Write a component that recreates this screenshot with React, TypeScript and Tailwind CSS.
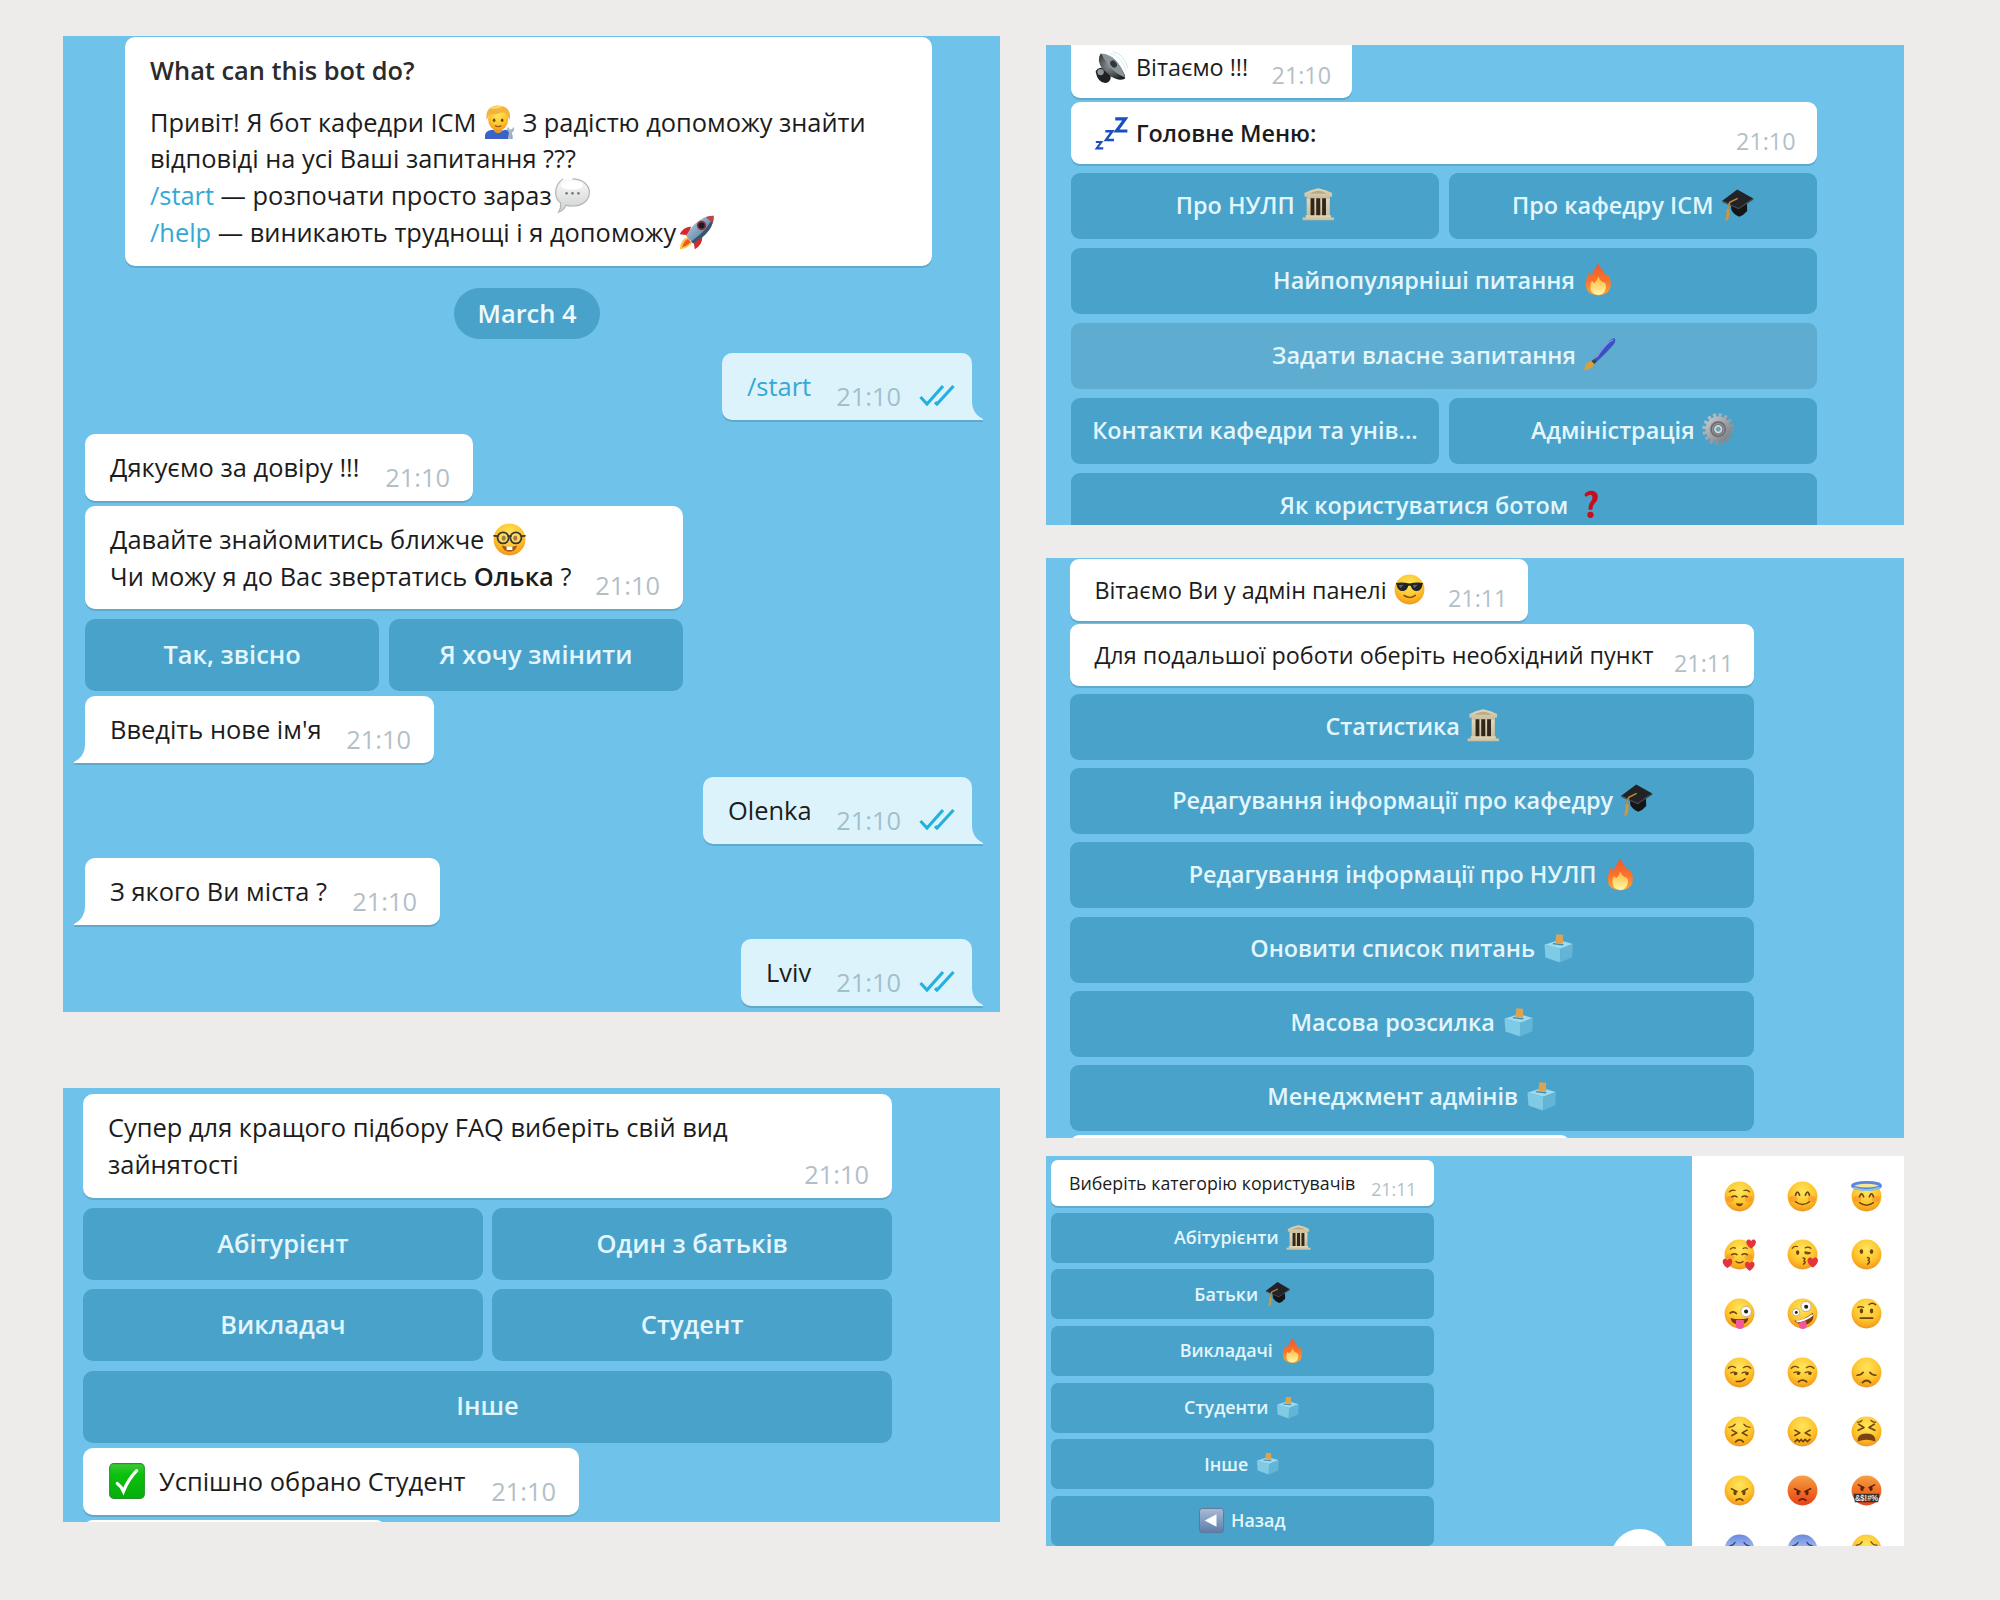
import React from "react";

type Size = "lg" | "md" | "sm";

const DARK = "#6e4310";

function Defs() {
  return (
    <svg className="absolute h-0 w-0" aria-hidden="true">
      <defs>
        <radialGradient id="face" cx="50%" cy="32%" r="68%">
          <stop offset="0" stopColor="#ffe65c" />
          <stop offset="0.6" stopColor="#fdc62f" />
          <stop offset="0.9" stopColor="#f8a31a" />
          <stop offset="1" stopColor="#dd9640" />
        </radialGradient>
        <linearGradient id="angry" x1="0" y1="0" x2="0" y2="1">
          <stop offset="0" stopColor="#f6a146" />
          <stop offset="0.55" stopColor="#ee6a22" />
          <stop offset="1" stopColor="#e8401a" />
        </linearGradient>
        <linearGradient id="cold" x1="0" y1="0" x2="0" y2="1">
          <stop offset="0" stopColor="#6a8ade" />
          <stop offset="0.5" stopColor="#a9bff0" />
          <stop offset="1" stopColor="#fdc62f" />
        </linearGradient>
        <linearGradient id="flame" x1="0" y1="0" x2="0" y2="1">
          <stop offset="0" stopColor="#f2552c" />
          <stop offset="0.55" stopColor="#f9752b" />
          <stop offset="1" stopColor="#f9a53c" />
        </linearGradient>
        <linearGradient id="flameIn" x1="0" y1="0" x2="0" y2="1">
          <stop offset="0" stopColor="#fdb53a" />
          <stop offset="1" stopColor="#fff7a8" />
        </linearGradient>
        <linearGradient id="bubble" x1="0" y1="0" x2="0" y2="1">
          <stop offset="0" stopColor="#fafafa" />
          <stop offset="1" stopColor="#cfd0d1" />
        </linearGradient>
        <linearGradient id="green" x1="0" y1="0" x2="0" y2="1">
          <stop offset="0" stopColor="#3fca35" />
          <stop offset="0.3" stopColor="#0cc10e" />
          <stop offset="1" stopColor="#04ad0c" />
        </linearGradient>
        <linearGradient id="rocket" x1="0" y1="0" x2="1" y2="1">
          <stop offset="0" stopColor="#c9dcec" />
          <stop offset="0.5" stopColor="#7e9fba" />
          <stop offset="1" stopColor="#41607c" />
        </linearGradient>
        <linearGradient id="stone" x1="0" y1="0" x2="0" y2="1">
          <stop offset="0" stopColor="#e3d8b8" />
          <stop offset="1" stopColor="#c9bd9f" />
        </linearGradient>
        <linearGradient id="steel" x1="0" y1="0" x2="1" y2="1">
          <stop offset="0" stopColor="#c4c6ca" />
          <stop offset="1" stopColor="#7d7f86" />
        </linearGradient>
        <linearGradient id="back" x1="0" y1="0" x2="0" y2="1">
          <stop offset="0" stopColor="#a9bcd6" />
          <stop offset="1" stopColor="#5d7caa" />
        </linearGradient>
        <radialGradient id="cone" cx="40%" cy="45%" r="65%">
          <stop offset="0" stopColor="#8d9499" />
          <stop offset="0.6" stopColor="#4b5053" />
          <stop offset="1" stopColor="#1d1f21" />
        </radialGradient>
      </defs>
    </svg>
  );
}

function L({ d, w = 1.5, c = DARK }: { d: string; w?: number; c?: string }) {
  return <path d={d} fill="none" stroke={c} strokeWidth={w} strokeLinecap="round" strokeLinejoin="round" />;
}

function Base({ fill = "url(#face)" }: { fill?: string }) {
  return <circle cx="16" cy="16" r="15.4" fill={fill} />;
}

function Blush() {
  return (
    <g fill="#f7772a" opacity="0.4">
      <ellipse cx="6.5" cy="18.5" rx="4.2" ry="3.2" />
      <ellipse cx="25.5" cy="18.5" rx="4.2" ry="3.2" />
    </g>
  );
}

function Dots({ y = 13 }: { y?: number }) {
  return (
    <g fill={DARK}>
      <ellipse cx="10.8" cy={y} rx="1.8" ry="2.5" />
      <ellipse cx="21.2" cy={y} rx="1.8" ry="2.5" />
    </g>
  );
}

function Heart({ x, y, s = 1 }: { x: number; y: number; s?: number }) {
  return (
    <path
      transform={`translate(${x} ${y}) scale(${s})`}
      d="M0 4.6C-3 2.6-5-.2-4.4-2.4-3.8-4.6-1-4.8 0-2.6 1-4.8 3.8-4.6 4.4-2.4 5-.2 3 2.6 0 4.6Z"
      fill="#e3333c"
    />
  );
}

const EMOJI: Record<string, React.ReactNode> = {
  relaxed: (
    <>
      <Base />
      <Blush />
      <L d="M5.5 11.2Q8 8.6 11.5 9.8M26.5 11.2Q24 8.6 20.5 9.8" w={1.2} />
      <L d="M8 16.4Q10.6 14.4 13.4 16.4M24 16.4Q21.4 14.4 18.6 16.4" />
      <path d="M12.2 22.6Q16 24 19.8 22.6 18.8 26 16 26T12.2 22.6Z" fill={DARK} />
    </>
  ),
  blush: (
    <>
      <Base />
      <Blush />
      <L d="M8.8 14.6Q10.8 8.4 13 14.6M19 14.6Q21.2 8.4 23.2 14.6" w={1.7} />
      <L d="M8.8 21.4Q16 27 23.2 21.4" />
    </>
  ),
  halo: (
    <>
      <Base />
      <Blush />
      <L d="M8.8 16.2Q10.8 10.4 13 16.2M19 16.2Q21.2 10.4 23.2 16.2" w={1.7} />
      <L d="M8.8 22.4Q16 27.6 23.2 22.4" />
      <ellipse cx="16" cy="4.8" rx="14.4" ry="3.4" fill="#f3e79a" stroke="#5a86dc" strokeWidth="3" />
      <path d="M2.4 6.8Q16 12 29.6 6.8" fill="none" stroke="#87c6ea" strokeWidth="1.8" />
    </>
  ),
  hearts: (
    <>
      <Base />
      <Blush />
      <L d="M6.5 10.4Q9 8 11.8 9.4M24 9.6Q21.6 8.4 19.8 9.8" w={1.2} />
      <L d="M8 16.2Q10.6 14.2 13.4 16.2M24 16.2Q21.4 14.2 18.6 16.2" />
      <L d="M12.4 23.2Q16 26 19.6 23.2" />
      <Heart x={28} y={5} s={1.1} />
      <Heart x={3.6} y={25} s={1.1} />
      <Heart x={26.6} y={28} s={1.1} />
    </>
  ),
  kissHeart: (
    <>
      <Base />
      <L d="M5.4 9.6Q7.6 6.6 10.8 7.8M18.6 9.2Q21.6 7.4 24.6 9.6" w={1.2} />
      <ellipse cx="11" cy="14" rx="1.7" ry="2.4" fill={DARK} />
      <L d="M18.6 14.4Q21 16.4 24 14.4M18.6 13.4 24 14.4" w={1.3} />
      <L d="M16.6 19.6Q20 19.8 17.4 22.6 20.4 23.6 17 26" />
      <Heart x={26.6} y={24} s={1.2} />
    </>
  ),
  kiss: (
    <>
      <Base />
      <Dots />
      <L d="M17 19.2Q20.4 19.4 17.8 22.2 20.8 23.2 17.2 26" />
    </>
  ),
  winkTongue: (
    <>
      <Base />
      <L d="M6.4 15.6Q9.6 13 12.8 16" w={1.7} />
      <circle cx="22.8" cy="14" r="5.4" fill="#fff" stroke="#a9a396" strokeWidth="0.8" />
      <circle cx="22.8" cy="14" r="2.1" fill="#27211c" />
      <path d="M6.6 20.6Q16 23.4 25.4 20.6 24 27.4 16 27.4T6.6 20.6Z" fill="#7a3a12" />
      <path d="M12.4 22.6H20.6V28.6Q20.2 32 16.5 32T12.4 28.6Z" fill="#f2569c" />
    </>
  ),
  zany: (
    <>
      <Base />
      <circle cx="19.6" cy="8.8" r="5.2" fill="#fff" stroke="#a9a396" strokeWidth="0.8" />
      <circle cx="19.8" cy="9" r="2.1" fill="#27211c" />
      <circle cx="9.4" cy="14.8" r="3.8" fill="#fff" stroke="#a9a396" strokeWidth="0.8" />
      <circle cx="9.6" cy="15" r="1.5" fill="#27211c" />
      <path d="M7.4 23.6Q18 23 26.6 15.2 29 22 22.6 26.4 14.6 30.6 7.4 23.6Z" fill="#7a3a12" />
      <path d="M9 23.6Q18.6 22.6 26.2 16.6L26.8 18.4Q20 24.4 10.4 25.2Z" fill="#fff" />
      <path d="M11.8 25.6 19.6 23.4 20.4 28.6Q20 32 16.4 32T12.6 29Z" fill="#f2569c" />
    </>
  ),
  raised: (
    <>
      <Base />
      <Dots y={13.4} />
      <L d="M7 9.6Q10 8.2 13 9.6M18.6 6.8Q22 4 25.4 7" w={1.5} />
      <L d="M9.6 20.8H22.4" w={1.7} />
    </>
  ),
  smirk: (
    <>
      <Base />
      <L d="M4.4 11.6Q7.4 8 12 11M20 11Q24.6 8 27.6 11.6" w={1.3} />
      <L d="M7 16.6Q10 14.6 13.4 16.6M18.6 16.6Q21.8 14.6 25 16.6" w={1.3} />
      <circle cx="11.8" cy="17.2" r="1.7" fill={DARK} />
      <circle cx="23.6" cy="17.2" r="1.7" fill={DARK} />
      <L d="M12.6 25.2Q18.6 26 21.8 22.4" />
    </>
  ),
  unamused: (
    <>
      <Base />
      <L d="M4.4 11.6Q7.4 8 12 11M20 11Q24.6 8 27.6 11.6" w={1.3} />
      <L d="M7 16.2Q10 14.6 13.4 16.2M18.6 16.2Q21.8 14.6 25 16.2" w={1.3} />
      <circle cx="11.8" cy="17" r="1.7" fill={DARK} />
      <circle cx="23.6" cy="17" r="1.7" fill={DARK} />
      <L d="M11.8 25.6Q16 22.2 20.2 25.6" w={1.8} />
    </>
  ),
  sad: (
    <>
      <Base />
      <L d="M6.2 18.8Q10.4 18.8 12.6 15.8M25.8 18.8Q21.6 18.8 19.4 15.8" w={1.7} />
      <L d="M11.8 26.4Q16 22.2 20.2 26.4" w={1.8} />
    </>
  ),
  persevere: (
    <>
      <Base />
      <L d="M5 11.6Q9.4 11.4 11.6 8.4M27 11.6Q22.6 11.4 20.4 8.4" w={1.2} />
      <L d="M8.2 14.6 13.2 17.4 8.2 20.2M23.8 14.6 18.8 17.4 23.8 20.2" w={1.7} />
      <L d="M12 26.6Q16 22.6 20 26.6" w={1.8} />
    </>
  ),
  confounded: (
    <>
      <Base />
      <L d="M8.2 14.6 13.2 17.4 8.2 20.2M23.8 14.6 18.8 17.4 23.8 20.2" w={1.7} />
      <L d="M8.4 26.4 10.6 24.2 12.8 26.4 14.6 24.2 16.6 26.4 18.8 24.2 21 26.4 23.6 24.2" w={1.7} />
    </>
  ),
  tired: (
    <>
      <Base />
      <L d="M6.6 6.4Q9.6 6.6 11.4 4.4M25.4 6.4Q22.4 6.6 20.6 4.4" w={1.2} />
      <L d="M8 8.4 13.4 11.8 7.4 14.8M24 8.4 18.6 11.8 24.6 14.8" w={1.7} />
      <path d="M6.8 26.4Q6 18 16 18T25.2 26.4Q16 22.4 6.8 26.4Z" fill="#7a4314" />
    </>
  ),
  angry: (
    <>
      <Base />
      <L d="M7.6 14.2 13.6 17.2M24.4 14.2 18.4 17.2" />
      <ellipse cx="11.4" cy="18.2" rx="1.7" ry="2.6" fill={DARK} />
      <ellipse cx="20.6" cy="18.2" rx="1.7" ry="2.6" fill={DARK} />
      <L d="M12.6 26.2Q16 23 19.4 26.2" w={1.8} />
    </>
  ),
  rage: (
    <>
      <Base fill="url(#angry)" />
      <L d="M7.6 14.2 13.6 17.2M24.4 14.2 18.4 17.2" c="#5e200c" />
      <ellipse cx="11.4" cy="18.2" rx="1.7" ry="2.6" fill="#5e200c" />
      <ellipse cx="20.6" cy="18.2" rx="1.7" ry="2.6" fill="#5e200c" />
      <L d="M12.6 26.2Q16 23 19.4 26.2" w={1.8} c="#5e200c" />
    </>
  ),
  curse: (
    <>
      <Base fill="url(#angry)" />
      <L d="M7.6 10.2 13.4 13M24.4 10.2 18.6 13" c="#5e200c" />
      <ellipse cx="11.4" cy="14" rx="1.7" ry="2.6" fill="#5e200c" />
      <ellipse cx="20.6" cy="14" rx="1.7" ry="2.6" fill="#5e200c" />
      <path d="M2.6 19.4H29.4L28 28H4Z" fill="#35302f" />
      <text x="16" y="26.8" textAnchor="middle" fontSize="8.6" fontWeight="700" fill="#e9e9e9" fontFamily="Liberation Sans, sans-serif" textLength="24" lengthAdjust="spacingAndGlyphs">
        &amp;$!#%
      </text>
    </>
  ),
  cold: (
    <>
      <Base fill="url(#cold)" />
      <L d="M5.4 12.6Q9.6 12 11.4 8.6M26.6 12.6Q22.4 12 20.6 8.6" w={1.3} c="#3a4a86" />
      <Dots y={18} />
    </>
  ),
  cry: (
    <>
      <Base />
      <L d="M5.4 11.6Q9.6 11.4 11.4 8M26.6 11.6Q22.4 11.4 20.6 8" w={1.3} />
      <Dots y={18} />
    </>
  ),
  nerd: (
    <>
      <Base />
      <ellipse cx="10.4" cy="14.6" rx="2" ry="2.6" fill={DARK} />
      <ellipse cx="21.6" cy="14.6" rx="2" ry="2.6" fill={DARK} />
      <circle cx="9.8" cy="14.4" r="5.4" fill="#f5e9a0" fillOpacity="0.35" stroke="#3b3630" strokeWidth="1.7" />
      <circle cx="22.2" cy="14.4" r="5.4" fill="#f5e9a0" fillOpacity="0.35" stroke="#3b3630" strokeWidth="1.7" />
      <L d="M14.8 12.8H17.2M1 12.4 4.6 12.8M31 12.4 27.4 12.8" c="#3b3630" w={1.7} />
      <path d="M8.6 21.8Q16 24.4 23.4 21.8 22 27.8 16 27.8T8.6 21.8Z" fill="#a4561d" />
      <path d="M13.2 22.8H18.8V26.2H13.2Z" fill="#fff" />
    </>
  ),
  cool: (
    <>
      <Base />
      <path d="M2 9.4Q8 8.2 16 9.8 24 8.2 30 9.4L29.2 11.6Q28 17.6 23.2 17.6 18.8 17.6 17.2 12H14.8Q13.2 17.6 8.8 17.6 4 17.6 2.8 11.6Z" fill="#1f2326" />
      <path d="M5 11.4 10 11 6.4 14.6ZM19.4 11.4 24.4 11 20.8 14.8Z" fill="#5c666d" />
      <L d="M10.4 22.2Q16.4 26.4 22 22" c="#8c4d13" w={1.7} />
    </>
  ),
  mechanic: (
    <>
      <path d="M2.8 32V28.6Q3.4 24 10 23.4L16 25 22 23.4Q28 24 28.6 28.6V32Z" fill="#3a63c8" />
      <path d="M11.6 20H18.8V25Q15.2 28 11.6 25Z" fill="#e69d20" />
      <ellipse cx="15.2" cy="13.4" rx="9.4" ry="10.8" fill="url(#face)" />
      <path d="M4.4 14Q2.4 1.2 15 .4 28 .8 26.2 14L23.8 10.4Q22.8 6.6 19 6.8 11 9.6 7 8.6Z" fill="#f2b43c" />
      <path d="M7 3.8Q13-.6 20 1.6 14 3.6 7 3.8Z" fill="#ffdc74" />
      <ellipse cx="11.4" cy="14.4" rx="1.2" ry="1.6" fill={DARK} />
      <ellipse cx="19" cy="14.4" rx="1.2" ry="1.6" fill={DARK} />
      <L d="M12.6 19.6Q15.2 21 17.8 19.6" w={1.2} c="#a3501d" />
      <path d="M24.2 32 25.4 26 23.4 23.2 24.4 20.4 26 23 28.2 22.8 29.6 20.4 30.4 23.4 28.2 26.4 28 32Z" fill="#a5b6c4" />
    </>
  ),
  speech: (
    <>
      <path d="M16 .8C24.8.8 31.4 6 31.4 13.2S24.8 25.6 16.4 25.6Q12.6 25.8 10 24.8 8 29.8 3.4 31.2 5.6 27.6 5.2 22.8 .6 19.4.6 13.2.6 6 7.2.8 16 .8Z" fill="url(#bubble)" stroke="#b3b4b6" strokeWidth="1.1" />
      <ellipse cx="15.4" cy="6.6" rx="10" ry="4.2" fill="#fff" />
      <g fill="#77797c">
        <circle cx="10.6" cy="14" r="1.2" />
        <circle cx="16" cy="14" r="1.2" />
        <circle cx="21.4" cy="14" r="1.2" />
      </g>
    </>
  ),
  rocketShip: (
    <>
      <path d="M8 20Q1 22.4.8 31.4 8 30.4 12 25.6Z" fill="#f9c53a" />
      <path d="M8.4 22Q4.2 24 2.8 29.6 8 28 10.6 25Z" fill="#f0552a" />
      <path d="M11 10.4Q3.6 11 .6 17.6L8.6 18.4Z" fill="#d4282a" />
      <path d="M21.4 20.6Q21 28 14.4 31.2L13.2 23.4Z" fill="#d4282a" />
      <path d="M31.6.6Q32.4 14.6 13 26L6.4 19Q16 1.4 31.6.6Z" fill="url(#rocket)" />
      <path d="M31.6.6Q32.4 14.6 13 26L11.2 24.2Q27 13 31.6.6Z" fill="#3d5468" />
      <path d="M31.6.6Q31.6 4 30.4 7.2L24.6 1.8Q28 .6 31.6.6Z" fill="#b9464c" />
      <circle cx="20.6" cy="9.6" r="4.3" fill="#8f2f3e" />
      <circle cx="20.6" cy="9.6" r="2.7" fill="#191c22" />
    </>
  ),
  check: (
    <>
      <rect x="0.6" y="0.6" width="30.8" height="30.8" rx="3.6" fill="url(#green)" stroke="#22952a" strokeWidth="1" />
      <path d="M7.4 18.2Q10.6 20.4 12.8 25.2 17 14.6 24.6 6.8" fill="none" stroke="#fff" strokeWidth="2.9" strokeLinecap="round" />
    </>
  ),
  speaker: (
    <>
      <path d="M17 .8Q28 2 32 17" fill="none" stroke="#c9e7f0" strokeWidth="0.9" />
      <path d="M14.4 2.4Q26 5 30 19" fill="none" stroke="#d6eef4" strokeWidth="0.9" />
      <path d="M.6 20.2Q2 15.6 8.6 16.2L15.2 23.4Q16 27.6 12.4 30.6 3.2 32.8.6 20.2Z" fill="#1e2022" />
      <ellipse cx="5.4" cy="20.4" rx="3.2" ry="3" fill="#8d949a" />
      <path d="M5.4 2.6Q1.4 8.8 7 17.2L15.2 24.6Q23 29.6 29 27L29.2 24Q20.4 3.4 5.4 2.6Z" fill="url(#cone)" />
      <path d="M6 2.4Q22 3.4 29.4 25.6 15.6 21.4 6 2.4Z" fill="#8a9499" />
      <ellipse cx="18" cy="12.6" rx="2.8" ry="3.8" transform="rotate(-38 18 12.6)" fill="#31373b" />
    </>
  ),
  zzz: (
    <g fill="none" stroke="#1a50bd" strokeLinecap="butt" strokeLinejoin="miter">
      <path d="M19.6 1.8H29.4L20.8 13.6H31.4" strokeWidth="3.1" />
      <path d="M10 13.8H16.8L10.6 22.4H18.4" strokeWidth="2.4" />
      <path d="M.8 24.2H6.2L1.6 30.4H8" strokeWidth="2" />
    </g>
  ),
  bank: (
    <>
      <path d="M5.6 9H26.4V28H5.6Z" fill="#30261a" />
      <path d="M16 .2Q24 1.6 29.6 5V8.6H27.4V10.2H4.6V8.6H2.4V5Q8 1.6 16 .2Z" fill="url(#stone)" />
      <path d="M16 2.4Q21 3.4 25 5.6H7Q11 3.4 16 2.4Z" fill="#b9ab88" />
      <g fill="url(#stone)">
        <rect x="4.6" y="10" width="3.8" height="17.6" />
        <rect x="12.2" y="10" width="1.8" height="17.6" />
        <rect x="18" y="10" width="1.8" height="17.6" />
        <rect x="23.6" y="10" width="3.8" height="17.6" />
        <path d="M3.6 26.8H28.4V29H31.4V31.8H.6V29H3.6Z" />
      </g>
    </>
  ),
  cap: (
    <>
      <path d="M9.6 14 25.6 15.6 25.8 22.6Q22 27 18 28.2 12.6 26 10.2 21.6Z" fill="#141517" />
      <path d="M16 1.4 31.8 10.4 17.4 19.4 1.2 12.6Z" fill="#222326" />
      <path d="M17.4 19.4 31.8 10.4V11.6L17.4 20.8 1.2 13.8V12.6Z" fill="#47484b" />
      <path d="M16.4 10.2 8.6 14Q6.6 18.6 6.4 22" fill="none" stroke="#bf8a39" strokeWidth="1.5" />
      <path d="M5.4 20.6 8.4 20.8Q9 26.8 6.8 32H4Q6 26 5.4 20.6Z" fill="#d1953c" />
    </>
  ),
  fire: (
    <>
      <path d="M15.6 0Q17.4 4 21 8.4 23 11 23.4 13.8 24.6 12.2 24.4 10.2 28.8 15.6 28.4 22 27.4 31.6 16 32 4.6 31.6 3.6 22 3.4 17.8 5.8 12.4 6.4 10.4 6.4 9 8.6 10.8 9.4 13.4 10 9 12.6 6 15 3.2 15.6 0Z" fill="url(#flame)" />
      <path d="M16 13Q17 16.8 20.4 19 23.6 18.6 23.6 24 22.4 31 16 31.4 9 31 8.2 24.6 8 20.4 9.8 17.4 10.6 19.4 12.2 19.6 15.4 17 16 13Z" fill="url(#flameIn)" />
    </>
  ),
  brush: (
    <>
      <path d="M31.4.4Q32.6 2.8 29.8 7 23 14.8 14 23L11.6 20.8Q17 11.8 25.8 3 29-.2 31.4.4Z" fill="#3a50c4" />
      <path d="M30 1.8Q26.4 2.4 21.6 8 16.8 13.6 13.4 19" fill="none" stroke="#8a9ae8" strokeWidth="1.3" />
      <path d="M11.4 20.4 14 23 10.8 25.8 8 23Z" fill="#43454e" />
      <path d="M8 22.6 11.2 25.8Q10 30.2.6 32 2 29.6 2.2 27 3.8 23.4 8 22.6Z" fill="#d9a13c" />
    </>
  ),
  gear: (
    <>
      <circle cx="16" cy="16" r="13.8" fill="none" stroke="url(#steel)" strokeWidth="3.8" strokeDasharray="2.9 2.52" />
      <circle cx="16" cy="16" r="10" fill="none" stroke="url(#steel)" strokeWidth="5" />
      <circle cx="16" cy="16" r="8.4" fill="#8f9196" />
      <circle cx="16" cy="16" r="7" fill="none" stroke="#66686d" strokeWidth="1.2" />
      <circle cx="16" cy="16" r="4.6" fill="#d7d9db" stroke="#6d7075" strokeWidth="1" />
      <circle cx="16" cy="16" r="2.4" fill="#6aa3be" />
    </>
  ),
  question: (
    <>
      <path d="M9.4 6.4Q11.8 2.4 16.8 2.8 22.8 3.6 22.4 9.6 22 13 19 15.6 17.2 17.4 17 21.4H13.4Q13 16.4 15.6 13.6 18 10.8 17 8 15.4 5 11.8 8.2 9.4 9.2 9.4 6.4Z" fill="#c80d1e" />
      <circle cx="15.2" cy="26.4" r="3.1" fill="#c80d1e" />
    </>
  ),
  ballot: (
    <>
      <path d="M2.4 12.6 16.6 7.8 30.4 11.8 18 16.6Z" fill="#9fdaee" />
      <path d="M2.4 12.6 18 16.6 17.6 30 3.4 25Z" fill="#7fcae4" />
      <path d="M18 16.6 30.4 11.8 29.8 24.8 17.6 30Z" fill="#62b5d6" />
      <path d="M10.8 10.8 21.6 12 20.2 13.2 10.6 12Z" fill="#3c8cab" />
      <path d="M14.2 2.2 20.8 2.8 20.6 11.6 13 10.6Z" fill="#dba352" />
    </>
  ),
  backButton: (
    <>
      <rect x="0.6" y="0.6" width="30.8" height="30.8" rx="3.6" fill="url(#back)" stroke="#5f7699" strokeWidth="1.2" />
      <path d="M22.4 8V24L7.4 16Z" fill="#fff" />
    </>
  ),
};

function Emoji({ name, className = "" }: { name: string; className?: string }) {
  return (
    <svg viewBox="0 0 32 32" className={`shrink-0 overflow-visible ${className}`}>
      {EMOJI[name]}
    </svg>
  );
}

function Ticks() {
  return (
    <svg viewBox="0 0 36 22" className="mb-[14px] ml-[18px] h-[22px] w-[36px] shrink-0">
      <path d="M1.5 13 8 20 24 2M16 18.2 18 20 34.5 2" fill="none" stroke="#22b2df" strokeWidth="3.2" />
    </svg>
  );
}

function Tail({ side }: { side: "left" | "right" }) {
  return side === "right" ? (
    <svg viewBox="0 0 12 18" className="absolute -right-[11px] bottom-0 h-[18px] w-[12px] overflow-visible drop-shadow-[0_2px_0_#5fa9cd]">
      <path d="M0 0H1C1.4 8 5 13.5 12 17V18H0Z" fill="#dcf3fc" />
    </svg>
  ) : (
    <svg viewBox="0 0 12 18" className="absolute -left-[11px] bottom-0 h-[18px] w-[12px] overflow-visible drop-shadow-[0_2px_0_#5fa9cd]">
      <path d="M12 0H11C10.6 8 7 13.5 0 17V18H12Z" fill="#fff" />
    </svg>
  );
}

const BUBBLE: Record<Size, string> = {
  lg: "min-h-[67px] rounded-[10px] pl-[25px] pt-[15px]",
  md: "min-h-[62px] rounded-[9px] pl-[24px] pt-[14px]",
  sm: "min-h-[46px] rounded-[7px] pl-[18px] pt-[10px]",
};
const TEXT: Record<Size, string> = {
  lg: "text-[25.45px] leading-[36.7px]",
  md: "text-[23.35px] leading-[34px]",
  sm: "text-[17.8px] leading-[26px]",
};
const TIME: Record<Size, string> = {
  lg: "text-[25.4px] leading-[34px] mb-[7px]",
  md: "text-[23.3px] leading-[31px] mb-[7px]",
  sm: "text-[17.8px] leading-[24px] mb-[5px]",
};
const TIME_EDGE: Record<Size, string> = {
  lg: "pr-[23px]",
  md: "pr-[21px]",
  sm: "pr-[17px]",
};

function Bubble({
  size = "lg",
  time,
  out,
  tail,
  className = "",
  children,
}: {
  size?: Size;
  time?: string;
  out?: boolean;
  tail?: boolean;
  className?: string;
  children?: React.ReactNode;
}) {
  const corner = tail ? (out ? "rounded-br-none" : "rounded-bl-none") : "";
  const tone = out ? "self-end mr-[28px] bg-[#dcf3fc]" : "bg-white";
  return (
    <div className={`relative flex shrink-0 justify-between shadow-[0_2px_0_#5fa9cd] ${BUBBLE[size]} ${tone} ${corner} ${className}`}>
      {tail && <Tail side={out ? "right" : "left"} />}
      <div className={`whitespace-pre text-[#1c1c1c] ${TEXT[size]}`}>{children}</div>
      {time && (
        <div className={`flex items-end self-end ${out ? "pr-[17px]" : TIME_EDGE[size]}`}>
          <span className={`${TIME[size]} ${out ? "text-[#a3bfcc]" : "text-[#b3bfc7]"}`}>{time}</span>
          {out && <Ticks />}
        </div>
      )}
    </div>
  );
}

const BUTTON: Record<Size, string> = {
  lg: "h-[72px] rounded-[10px] text-[25.45px] leading-[36px] pb-[3px]",
  md: "h-[66px] rounded-[9px] text-[23.4px] leading-[34px] pb-[3px]",
  sm: "h-[50px] rounded-[7px] text-[17.9px] leading-[26px] pb-[1px]",
};
const ICON: Record<Size, string> = {
  lg: "size-[35px]",
  md: "size-[32.5px]",
  sm: "size-[25px]",
};

function Button({
  size = "lg",
  label,
  icon,
  lead,
  hover,
  className = "",
}: {
  size?: Size;
  label: string;
  icon?: string;
  lead?: boolean;
  hover?: boolean;
  className?: string;
}) {
  return (
    <button
      className={`flex flex-1 items-center justify-center gap-[7px] whitespace-nowrap font-semibold text-[#e2f6fe] ${
        hover ? "bg-[#5eaccf]" : "bg-[#49a2c9]"
      } ${BUTTON[size]} ${lead ? "flex-row-reverse" : ""} ${className}`}
    >
      <span>{label}</span>
      {icon && <Emoji name={icon} className={ICON[size]} />}
    </button>
  );
}

function Row({ className = "", children }: { className?: string; children: React.ReactNode }) {
  return <div className={`flex shrink-0 gap-[9.5px] ${className}`}>{children}</div>;
}

const PANEL = "flex shrink-0 flex-col items-start overflow-hidden bg-[#6fc2ea]";

const FACES = [
  "relaxed", "blush", "halo",
  "hearts", "kissHeart", "kiss",
  "winkTongue", "zany", "raised",
  "smirk", "unamused", "sad",
  "persevere", "confounded", "tired",
  "angry", "rage", "curse",
  "cold", "cold", "cry",
];

const ADMIN = [
  ["Статистика", "bank"],
  ["Редагування інформації про кафедру", "cap"],
  ["Редагування інформації про НУЛП", "fire"],
  ["Оновити список питань", "ballot"],
  ["Масова розсилка", "ballot"],
  ["Менеджмент адмінів", "ballot"],
];

const CATEGORIES = [
  ["Абітурієнти", "bank"],
  ["Батьки", "cap"],
  ["Викладачі", "fire"],
  ["Студенти", "ballot"],
  ["Інше", "ballot"],
];

function WelcomeChat() {
  return (
    <section className={`${PANEL} h-[975.5px] pl-[22px]`}>
      <div className="ml-[40px] mt-px h-[229px] w-[807px] shrink-0 whitespace-pre rounded-[10px] bg-white pl-[25px] pt-[15px] text-[25.4px] leading-[36.7px] text-[#1c1c1c] shadow-[0_2px_0_#5fa9cd]">
        <div className="font-semibold text-[#2b2b2b]">What can this bot do?</div>
        <div className="mt-[15px] flex items-center">
          Привіт! Я бот кафедри ІСМ
          <Emoji name="mechanic" className="mx-[6px] size-[34px]" />
          З радістю допоможу знайти
        </div>
        <div>відповіді на усі Ваші запитання ???</div>
        <div className="flex items-center">
          <span className="text-[#35a8d4]">/start</span> — розпочати просто зараз
          <Emoji name="speech" className="ml-[3px] size-[35px]" />
        </div>
        <div className="flex items-center">
          <span className="text-[#35a8d4]">/help</span> — виникають труднощі і я допоможу
          <Emoji name="rocketShip" className="ml-[3px] size-[35px]" />
        </div>
      </div>
      <div className="ml-[369px] mt-[22px] flex h-[51px] w-[146px] shrink-0 items-center justify-center rounded-full bg-[#49a2c9] text-[25.4px] font-semibold text-[#effaff]">
        March 4
      </div>
      <Bubble out tail time="21:10" className="mt-[14px] w-[250px]">
        <span className="text-[#35a8d4]">/start</span>
      </Bubble>
      <Bubble time="21:10" className="mt-[14px] w-[388px]">Дякуємо за довіру !!!</Bubble>
      <Bubble time="21:10" className="mt-[5px] h-[103px] w-[598px]">
        <div className="flex items-center">
          Давайте знайомитись ближче
          <Emoji name="nerd" className="ml-[9px] size-[33px]" />
        </div>
        <div>
          Чи можу я до Вас звертатись <span className="font-semibold">Олька</span> ?
        </div>
      </Bubble>
      <Row className="mt-[10px] w-[598px]">
        <Button label="Так, звісно" />
        <Button label="Я хочу змінити" />
      </Row>
      <Bubble tail time="21:10" className="mt-[5px] w-[349px]">Введіть нове ім'я</Bubble>
      <Bubble out tail time="21:10" className="mt-[14px] w-[269px]">Olenka</Bubble>
      <Bubble tail time="21:10" className="mt-[14px] w-[355px]">З якого Ви міста ?</Bubble>
      <Bubble out tail time="21:10" className="mt-[14px] w-[231px]">Lviv</Bubble>
    </section>
  );
}

function OccupationChat() {
  return (
    <section className={`${PANEL} mt-[76.5px] h-[434px] pl-[20px]`}>
      <Bubble time="21:10" className="mt-[6px] h-[104px] w-[809px]">
        <div>Супер для кращого підбору FAQ виберіть свій вид</div>
        <div>зайнятості</div>
      </Bubble>
      <div className="mt-[10px] flex w-[809px] shrink-0 flex-col gap-[9.4px]">
        <Row>
          <Button label="Абітурієнт" />
          <Button label="Один з батьків" />
        </Row>
        <Row>
          <Button label="Викладач" />
          <Button label="Студент" />
        </Row>
        <Row>
          <Button label="Інше" />
        </Row>
      </div>
      <Bubble time="21:10" className="mt-[5px] w-[496px]">
        <div className="flex items-center">
          <Emoji name="check" className="ml-[1px] mr-[14px] size-[36px]" />
          Успішно обрано Студент
        </div>
      </Bubble>
      <div className="mt-[5px] h-[67px] w-[303px] shrink-0 rounded-[10px] bg-white" />
    </section>
  );
}

function MainMenuChat() {
  return (
    <section className={`${PANEL} h-[480px] pl-[25px]`}>
      <Bubble size="md" time="21:10" className="-mt-[9px] w-[281px]">
        <div className="flex items-center">
          <Emoji name="speaker" className="mr-[8px] size-[33px]" />
          Вітаємо !!!
        </div>
      </Bubble>
      <Bubble size="md" time="21:10" className="mt-[4px] w-[745.5px]">
        <div className="flex items-center font-semibold">
          <Emoji name="zzz" className="mr-[8px] size-[33px]" />
          Головне Меню:
        </div>
      </Bubble>
      <div className="mt-[9px] flex w-[745.5px] shrink-0 flex-col gap-[9px]">
        <Row>
          <Button size="md" label="Про НУЛП" icon="bank" />
          <Button size="md" label="Про кафедру ІСМ" icon="cap" />
        </Row>
        <Row>
          <Button size="md" label="Найпопулярніші питання" icon="fire" />
        </Row>
        <Row>
          <Button size="md" label="Задати власне запитання" icon="brush" hover />
        </Row>
        <Row>
          <Button size="md" label="Контакти кафедри та унів..." />
          <Button size="md" label="Адміністрація" icon="gear" />
        </Row>
        <Row>
          <Button size="md" label="Як користуватися ботом" icon="question" />
        </Row>
      </div>
    </section>
  );
}

function AdminChat() {
  return (
    <section className={`${PANEL} mt-[32.5px] h-[580px] pl-[24.4px]`}>
      <Bubble size="md" time="21:11" className="mt-[1px] w-[458px]">
        <div className="flex items-center">
          Вітаємо Ви у адмін панелі
          <Emoji name="cool" className="ml-[7px] size-[31px]" />
        </div>
      </Bubble>
      <Bubble size="md" time="21:11" className="mt-[3px] w-[684px]">Для подальшої роботи оберіть необхідний пункт</Bubble>
      <div className="mt-[8.5px] flex w-[684px] shrink-0 flex-col gap-[8.2px]">
        {ADMIN.map(([label, icon]) => (
          <Row key={label}>
            <Button size="md" label={label} icon={icon} />
          </Row>
        ))}
      </div>
      <div className="mt-[4px] h-[62px] w-[500px] shrink-0 rounded-[9px] bg-white" />
    </section>
  );
}

function CategoriesChat() {
  return (
    <section className="mt-[18px] flex h-[390px] shrink-0 overflow-hidden">
      <div className={`${PANEL} relative w-[646px] pl-[5px]`}>
        <Bubble size="sm" time="21:11" className="mt-[4px] w-[382.5px]">Виберіть категорію користувачів</Bubble>
        <div className="mt-[7px] flex w-[382.5px] shrink-0 flex-col gap-[6.7px]">
          {CATEGORIES.map(([label, icon]) => (
            <Row key={label}>
              <Button size="sm" label={label} icon={icon} />
            </Row>
          ))}
          <Row>
            <Button size="sm" label="Назад" icon="backButton" lead />
          </Row>
        </div>
        <div className="absolute left-[565px] top-[373px] size-[58px] rounded-full bg-white" />
      </div>
      <div className="grid w-[212px] grid-cols-[repeat(3,31px)] content-start gap-x-[32.3px] gap-y-[27.9px] bg-white pl-[32px] pt-[25px]">
        {FACES.map((name, i) => (
          <Emoji key={i} name={name} className="size-[31px]" />
        ))}
      </div>
    </section>
  );
}

export default function App() {
  return (
    <main className="flex h-[1600px] w-[2000px] overflow-hidden bg-[#edecea] font-['Open_Sans','Noto_Sans',sans-serif]">
      <Defs />
      <div className="ml-[63px] flex w-[937px] flex-col pt-[36px]">
        <WelcomeChat />
        <OccupationChat />
      </div>
      <div className="ml-[46px] flex w-[858px] flex-col pt-[45px]">
        <MainMenuChat />
        <AdminChat />
        <CategoriesChat />
      </div>
    </main>
  );
}
